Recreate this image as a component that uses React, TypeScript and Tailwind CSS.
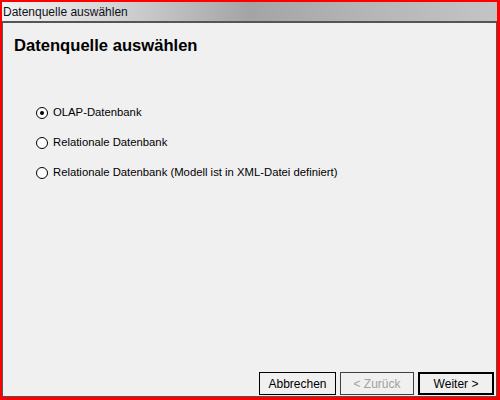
export default function App() {
  const options = [
    { label: "OLAP-Datenbank", checked: true },
    { label: "Relationale Datenbank", checked: false },
    { label: "Relationale Datenbank (Modell ist in XML-Datei definiert)", checked: false },
  ];

  return (
    <div
      className="w-[500px] h-[400px] bg-[#ff0000] pt-[2px] pl-[2px] pr-[3px] pb-[3px] flex flex-col"
      style={{ fontFamily: "'Liberation Sans', Arial, sans-serif" }}
    >
      {/* Title bar */}
      <div className="h-[19px] shrink-0 flex items-center px-[1px] bg-[linear-gradient(to_right,#f2f2f2_0%,#d8d8d8_20%,#a4a4a4_50%,#b6b6b6_75%,#c4c4c4_100%)]">
        <span className="text-[12px] text-[#101020] leading-none">Datenquelle auswählen</span>
      </div>

      {/* Body */}
      <div className="flex-1 flex flex-col bg-[#f0f0f0] border border-t-2 border-[#555555]">
        <h1 className="font-bold text-[16.6px] text-black pl-[11px] pt-[15px] leading-none">
          Datenquelle auswählen
        </h1>

        <div className="flex flex-col gap-[16px] pl-[33px] pt-[51px]">
          {options.map((o) => (
            <label key={o.label} className="flex items-center gap-[5px] h-[14px] text-[11.3px] text-black">
              <span className="w-[12px] h-[12px] rounded-full border border-black bg-white flex items-center justify-center">
                {o.checked && <span className="w-[4px] h-[4px] rounded-full bg-black" />}
              </span>
              <span>{o.label}</span>
            </label>
          ))}
        </div>

        <div className="mt-auto flex justify-end gap-[4px] pr-[2px] pb-[1px]">
          <button className="w-[77px] h-[23px] border border-black bg-[#f0f0f0] text-[12px] text-black">
            Abbrechen
          </button>
          <button className="w-[74px] h-[23px] border border-[#404040] bg-[#f0f0f0] text-[12px] text-[#a0a0a0]">
            &lt; Zurück
          </button>
          <button className="w-[76px] h-[23px] border-2 border-black bg-[#f0f0f0] text-[12px] text-black">
            Weiter &gt;
          </button>
        </div>
      </div>
    </div>
  );
}
